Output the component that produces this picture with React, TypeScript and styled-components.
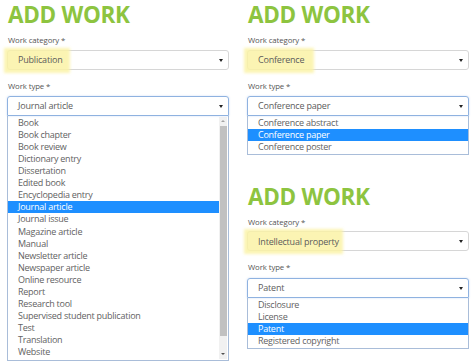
import React from "react";
import styled, { createGlobalStyle } from "styled-components";

const GlobalStyle = createGlobalStyle`
  html, body { margin: 0; padding: 0; background: #ffffff; }
  body { font-family: "Open Sans", "Noto Sans", sans-serif; color: #5a5a5a; }
`;

const Page = styled.div`
  display: flex;
  align-items: flex-start;
  gap: 18px;
  padding-left: 7px;
  width: 474px;
  height: 361px;
  box-sizing: border-box;
  overflow: hidden;
`;

const Column = styled.div`
  width: 222px;
  display: flex;
  flex-direction: column;
`;

const Form = styled.section<{ $gap?: number }>`
  display: flex;
  flex-direction: column;
  margin-top: ${(p) => p.$gap ?? 0}px;
`;

const Heading = styled.h1`
  margin: 0 0 0 1px;
  font-family: "Open Sans", sans-serif;
  font-weight: 700;
  font-size: 22.5px;
  line-height: 30px;
  color: #8dc440;
  letter-spacing: -0.3px;
`;

const Label = styled.div<{ $top: number }>`
  margin: ${(p) => p.$top}px 0 0 1px;
  font-size: 7.8px;
  line-height: 12px;
  letter-spacing: -0.1px;
  color: #555;
`;

const Select = styled.div<{ $focused?: boolean; $top: number }>`
  position: relative;
  margin-top: ${(p) => p.$top}px;
  height: 20px;
  box-sizing: border-box;
  border: 1px solid ${(p) => (p.$focused ? "#8fb2e0" : "#d6d6d6")};
  border-radius: ${(p) => (p.$focused ? "3px 3px 0 0" : "3px")};
  box-shadow: ${(p) => (p.$focused ? "0 0 2px rgba(100,150,220,0.35)" : "none")};
  display: flex;
  align-items: center;
  justify-content: space-between;
  padding: 0 5px 0 10px;
  font-size: 9px;
  letter-spacing: -0.2px;
  color: #5c5c5c;
  background: transparent;
`;

const Highlight = styled.span<{ $w: number }>`
  position: absolute;
  left: -4px;
  top: -3px;
  width: ${(p) => p.$w}px;
  height: 25px;
  background: #fbf3a6;
  filter: blur(1.5px);
  opacity: 0.85;
  z-index: 0;
`;

const Value = styled.span`
  position: relative;
  z-index: 1;
`;

const Arrow = styled.span`
  width: 0;
  height: 0;
  border-left: 2px solid transparent;
  border-right: 2px solid transparent;
  border-top: 3px solid #222;
  margin-top: 1px;
`;

const ListBox = styled.div`
  display: flex;
  border: 1px solid #a9bdd9;
  border-top: none;
  background: #fff;
`;

const Items = styled.ul`
  flex: 1;
  margin: 0;
  padding: 1px 0;
  list-style: none;
`;

const Item = styled.li<{ $active?: boolean }>`
  height: 12.1px;
  line-height: 12px;
  padding-left: 10px;
  font-size: 9px;
  letter-spacing: -0.25px;
  white-space: nowrap;
  color: ${(p) => (p.$active ? "#ffffff" : "#626262")};
  background: ${(p) => (p.$active ? "#1e8fff" : "transparent")};
`;

const ScrollBar = styled.div`
  width: 8px;
  margin: 1px 1px 1px 0;
  display: flex;
  flex-direction: column;
  align-items: center;
  background: #f1f1f1;
`;

const ScrollArrow = styled.div<{ $down?: boolean }>`
  height: 9px;
  display: flex;
  align-items: center;
  justify-content: center;
  &::before {
    content: "";
    width: 0;
    height: 0;
    border-left: 2px solid transparent;
    border-right: 2px solid transparent;
    ${(p) =>
      p.$down
        ? "border-top: 2px solid #505050;"
        : "border-bottom: 2px solid #a3a3a3;"}
  }
`;

const Thumb = styled.div`
  width: 7px;
  flex: 1;
  margin: 0 0 14px;
  background: #c1c1c1;
`;

type FormProps = {
  category: string;
  hlWidth: number;
  type: string;
  options: string[];
  scroll?: boolean;
  gap?: number;
};

function WorkForm({ category, hlWidth, type, options, scroll, gap }: FormProps) {
  return (
    <Form $gap={gap}>
      <Heading>ADD WORK</Heading>
      <Label $top={4}>Work category *</Label>
      <Select $top={3.5}>
        <Highlight $w={hlWidth} />
        <Value>{category}</Value>
        <Arrow />
      </Select>
      <Label $top={10}>Work type *</Label>
      <Select $top={4.2} $focused>
        <Value>{type}</Value>
        <Arrow />
      </Select>
      <ListBox>
        <Items>
          {options.map((o) => (
            <Item key={o} $active={o === type}>
              {o}
            </Item>
          ))}
        </Items>
        {scroll && (
          <ScrollBar>
            <ScrollArrow />
            <Thumb />
            <ScrollArrow $down />
          </ScrollBar>
        )}
      </ListBox>
    </Form>
  );
}

const publicationTypes = [
  "Book",
  "Book chapter",
  "Book review",
  "Dictionary entry",
  "Dissertation",
  "Edited book",
  "Encyclopedia entry",
  "Journal article",
  "Journal issue",
  "Magazine article",
  "Manual",
  "Newsletter article",
  "Newspaper article",
  "Online resource",
  "Report",
  "Research tool",
  "Supervised student publication",
  "Test",
  "Translation",
  "Website",
];

export default function App() {
  return (
    <>
      <GlobalStyle />
      <Page>
        <Column>
          <WorkForm
            category="Publication"
            hlWidth={66}
            type="Journal article"
            options={publicationTypes}
            scroll
          />
        </Column>
        <Column>
          <WorkForm
            category="Conference"
            hlWidth={70}
            type="Conference paper"
            options={["Conference abstract", "Conference paper", "Conference poster"]}
          />
          <WorkForm
            gap={27}
            category="Intellectual property"
            hlWidth={99}
            type="Patent"
            options={["Disclosure", "License", "Patent", "Registered copyright"]}
          />
        </Column>
      </Page>
    </>
  );
}
